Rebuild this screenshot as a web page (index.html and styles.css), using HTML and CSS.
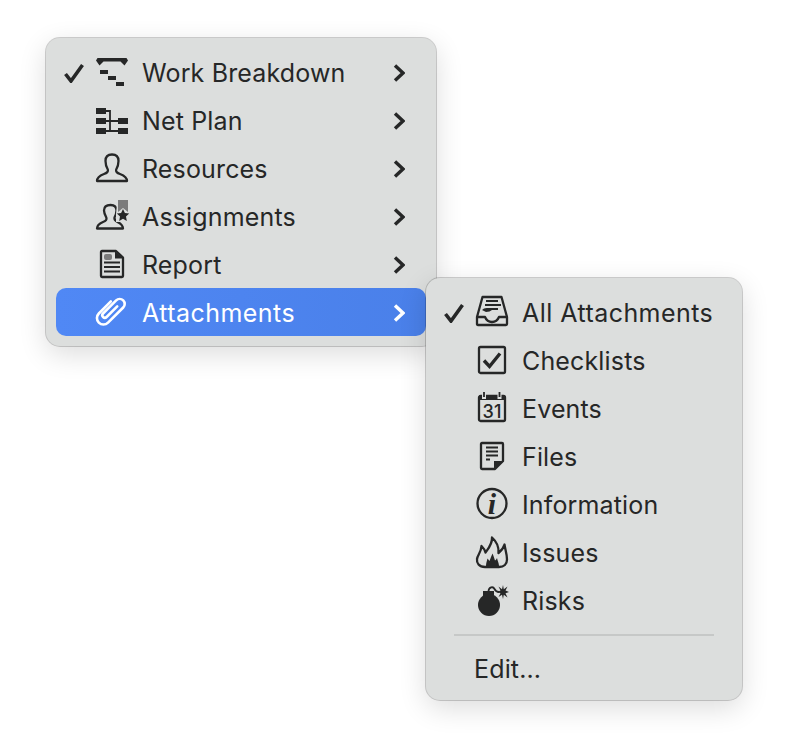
FILE: index.html
```html
<!DOCTYPE html>
<html lang="en">
<head>
<meta charset="utf-8">
<title>Menu</title>
<link rel="stylesheet" href="styles.css">
</head>
<body>
<div class="menu menu-main">
  <div class="row">
    <svg class="check" viewBox="0 0 20 20"><path d="M1.500 11 L7 18 L18.500 2"/></svg>
    <svg class="icon" viewBox="0 0 32 32"><path class="solid" d="M1.500 1 H30.500 L32 3.500 L28.500 8.500 L24.500 4.500 H7.500 L3.500 8.500 L0 3.500 Z"/><rect class="solid" x="4" y="13" width="8" height="4"/><rect class="solid" x="12" y="19" width="8" height="4"/><rect class="solid" x="20" y="25" width="8" height="4"/></svg>
    <span class="label">Work Breakdown</span>
    <svg class="chev" viewBox="0 0 12 18"><path d="M2 1.500 L10 9 L2 16.500"/></svg>
  </div>
  <div class="row">
    <span class="check"></span>
    <svg class="icon" viewBox="0 0 32 32"><rect class="solid" x="0" y="3" width="10" height="6"/><rect class="solid" x="0" y="13" width="10" height="6"/><rect class="solid" x="0" y="23" width="10" height="6"/><rect class="solid" x="22" y="13" width="10" height="6"/><rect class="solid" x="22" y="23" width="10" height="6"/><path class="thin" d="M10 6 H14 V26 M10 16 H14 M10 26 H22 M14 16 H22"/></svg>
    <span class="label">Net Plan</span>
    <svg class="chev" viewBox="0 0 12 18"><path d="M2 1.500 L10 9 L2 16.500"/></svg>
  </div>
  <div class="row">
    <span class="check"></span>
    <svg class="icon" viewBox="0 0 32 32"><path class="line" d="M1 28 C1 24.500 4 22.500 8 21 C11 20 12.500 18.500 11.800 16.500 C10.300 14 9.500 11 9.500 8 C9.500 4 12 1.500 16 1.500 C20 1.500 22.500 4 22.500 8 C22.500 11 21.700 14 20.200 16.500 C19.500 18.500 21 20 24 21 C28 22.500 31 24.500 31 28 Z"/></svg>
    <span class="label">Resources</span>
    <svg class="chev" viewBox="0 0 12 18"><path d="M2 1.500 L10 9 L2 16.500"/></svg>
  </div>
  <div class="row">
    <span class="check"></span>
    <svg class="icon" viewBox="0 0 32 32"><path class="line" d="M1 27.500 C1 24.500 3.500 22.500 7 21 C10 20 11 18.500 10.300 16.500 C9 14 8 12 8 9.500 C8 6 10.500 4 14.500 4 C18.500 4 20.500 6 20.500 9.500 C20.500 12 19.800 14 18.500 16.500 C18 19 19.500 20 21.500 21 C24.500 22.500 27 24.500 27 27.500 Z"/><path class="halo" d="M21.500 -2 H34 V21 H20 V13 Z"/><path class="ribbon" d="M22 -1 H32 V11 L27 7 L22 11 Z"/><path class="star" d="M27 8 L28.900 12.100 L33.200 12.600 L30 15.600 L30.800 20 L27 17.800 L23.200 20 L24 15.600 L20.800 12.600 L25.100 12.100 Z"/></svg>
    <span class="label">Assignments</span>
    <svg class="chev" viewBox="0 0 12 18"><path d="M2 1.500 L10 9 L2 16.500"/></svg>
  </div>
  <div class="row">
    <span class="check"></span>
    <svg class="icon" viewBox="0 0 32 32"><path class="line" d="M5 3 Q5 2 6 2 H20 L27 8.500 V27 Q27 28 26 28 H6 Q5 28 5 27 Z"/><path class="solid" d="M19 2 L27.500 9.500 H19 Z"/><rect class="ribbon" x="8" y="5" width="8" height="6" rx="2"/><path class="bars" d="M8 13.500 H24 M8 18 H24 M8 22.500 H24"/></svg>
    <span class="label">Report</span>
    <svg class="chev" viewBox="0 0 12 18"><path d="M2 1.500 L10 9 L2 16.500"/></svg>
  </div>
  <div class="row row-active">
    <span class="check"></span>
    <svg class="icon" viewBox="0 0 32 32"><g transform="rotate(45 14.500 14)"><path class="clip" d="M8 7 V24 A6.500 6.500 0 0 0 21 24 V2.500 A5 5 0 0 0 11 2.500 V21 A2.500 2.500 0 0 0 16 21 V6"/></g></svg>
    <span class="label label-wide">Attachments</span>
    <svg class="chev" viewBox="0 0 12 18"><path d="M2 1.500 L10 9 L2 16.500"/></svg>
  </div>
</div>
<div class="menu menu-sub">
  <div class="row">
    <svg class="check" viewBox="0 0 20 20"><path d="M1.500 11 L7 18 L18.500 2"/></svg>
    <svg class="icon" viewBox="0 0 32 32"><path class="line" d="M1 20 L6.500 0 H25.500 L31 20"/><path class="line" d="M1 20 H9 Q11 25 16 25 Q21 25 23 20 H31 V27 Q31 28 30 28 H2 Q1 28 1 27 Z"/><path class="bars" d="M10 4 H22 M9 8 H25"/><path class="solid" d="M6 13 Q8 10.500 12 11 H22 V13 H16 Q14 15 10 15 Z"/></svg>
    <span class="label label-wide">All Attachments</span>
  </div>
  <div class="row">
    <span class="check"></span>
    <svg class="icon" viewBox="0 0 32 32"><rect class="line" x="3" y="2" width="26" height="26" rx="1.500"/><path class="tick" d="M8 15.500 L13.500 21.500 L24 8.500"/></svg>
    <span class="label">Checklists</span>
  </div>
  <div class="row">
    <span class="check"></span>
    <svg class="icon" viewBox="0 0 32 32"><rect class="line" x="3" y="3" width="26" height="25" rx="1.500"/><path class="solid" d="M3 2.500 H29 V7 H3 Z"/><path class="notch" d="M8 0 V6 M23.500 0 V6"/><path class="peg" d="M8 -1 V4 M23.500 -1 V4"/><text class="cal" x="16" y="25">31</text></svg>
    <span class="label">Events</span>
  </div>
  <div class="row">
    <span class="check"></span>
    <svg class="icon" viewBox="0 0 32 32"><path class="line" d="M5 3 Q5 2 6 2 H26 Q27 2 27 3 V20 L19 28 H6 Q5 28 5 27 Z"/><path class="solid" d="M18 28 V20 H28 Z"/><path class="bars" d="M10 6.500 H22 M10 10.500 H22 M10 14.500 H22 M10 18.500 H14"/></svg>
    <span class="label">Files</span>
  </div>
  <div class="row">
    <span class="check"></span>
    <svg class="icon" viewBox="0 0 32 32"><circle class="line" cx="16" cy="14.500" r="14.500"/><text class="info" x="16" y="25">i</text></svg>
    <span class="label">Information</span>
  </div>
  <div class="row">
    <span class="check"></span>
    <svg class="icon" viewBox="0 0 32 32"><path class="line" d="M9 30 C3 30 0.500 26 1 22 C1.500 18 5 16 5.500 9 C7.500 11 9 13 9.500 15.500 C12 12 16.500 7 16 0.500 C20 4 23 9 22.500 16 C25 14 27.500 11 28.500 7.500 C29 12 31 17 31 22.500 C31 27 28 30 23 30 Z"/><path class="solid" d="M10 29 C10 26 11 24 11.500 21.500 C12.500 22.500 13 23.500 13.500 24 C14.500 21 15.500 19 16.500 16.500 C17.500 19 18.500 21.500 19 23.500 C20 23 20.500 22 21 21 C21.500 24 23 26 23 29 Z"/></svg>
    <span class="label">Issues</span>
  </div>
  <div class="row">
    <span class="check"></span>
    <svg class="icon" viewBox="0 0 32 32"><circle class="solid" cx="13" cy="20" r="11"/><rect class="solid" x="7" y="6" width="11" height="5"/><path class="fuse" d="M12.500 6 C13 2 17 1 18.500 4 C19.500 6 21 7 23 7"/><path class="star" d="M27 0 L27.800 4.200 L31.500 1.500 L29.500 5.500 L33 7 L29.500 8.200 L31.500 12.500 L27.800 9.800 L27 14 L26 9.800 L22.500 12 L24.500 8.200 L21 7 L24.500 5.500 L22.500 1.500 L26 4.200 Z"/></svg>
    <span class="label">Risks</span>
  </div>
  <div class="separator"></div>
  <div class="row row-plain">
    <span class="label">Edit...</span>
  </div>
</div>
</body>
</html>
```
FILE: styles.css
```css
* { box-sizing: border-box; }
html, body { margin: 0; padding: 0; background: #ffffff; }
body {
  position: relative;
  width: 788px;
  height: 754px;
  overflow: hidden;
  font-family: Inter, "Liberation Sans", sans-serif;
  font-size: 25px;
  color: #262727;
}
.menu {
  position: absolute;
  background: #dcdedd;
  border-radius: 14px;
  box-shadow: 0 0 0 1px rgba(0, 0, 0, 0.18), 0 8px 28px rgba(0, 0, 0, 0.14);
}
.menu-main {
  left: 46px;
  top: 38px;
  width: 390px;
  height: 308px;
  padding: 10px 10px;
}
.menu-main .row { padding-top: 2px; }
.menu-sub {
  left: 426px;
  top: 278px;
  width: 316px;
  height: 422px;
  padding: 11px 10px;
}
.row {
  display: flex;
  align-items: center;
  height: 48px;
  padding-left: 8px;
  border-radius: 10px;
}
.row-active {
  background: linear-gradient(90deg, #5088f5, #4a80e9);
  color: #ffffff;
}
.row-plain { padding-left: 38px; }
.check {
  width: 20px;
  height: 20px;
  margin-right: 12px;
  flex: none;
  fill: none;
  stroke: #262727;
  stroke-width: 3.600;
}
.icon {
  width: 32px;
  height: 32px;
  flex: none;
  margin-right: 14px;
  overflow: visible;
}
.label { flex: 1; letter-spacing: 0.15px; white-space: nowrap; }
.label-wide { letter-spacing: 0.45px; }
.chev {
  width: 12px;
  height: 18px;
  flex: none;
  margin-right: 21px;
  fill: none;
  stroke: #262727;
  stroke-width: 3.400;
}
.row-active .chev { stroke: #ffffff; }
.solid { fill: #262727; }
.line { fill: none; stroke: #262727; stroke-width: 2.300; stroke-linejoin: round; }
.thin { fill: none; stroke: #262727; stroke-width: 1.800; }
.bars { fill: none; stroke: #262727; stroke-width: 2; }
.tick { fill: none; stroke: #262727; stroke-width: 3.400; }
.notch { fill: none; stroke: #dcdedd; stroke-width: 4; }
.peg { fill: none; stroke: #262727; stroke-width: 1.800; }
.ribbon { fill: #7b7b7b; }
.halo { fill: #dcdedd; }
.star { fill: #262727; }
.clip { fill: none; stroke: #ffffff; stroke-width: 2.600; stroke-linecap: round; }
.fuse { fill: none; stroke: #262727; stroke-width: 1.800; }
.cal {
  font-family: Inter, "Liberation Sans", sans-serif;
  font-size: 18px;
  font-weight: 500;
  text-anchor: middle;
  fill: #262727;
}
.info {
  font-family: "Liberation Serif", serif;
  font-size: 30px;
  font-weight: 700;
  font-style: italic;
  text-anchor: middle;
  fill: #262727;
}
.separator {
  height: 2px;
  margin: 9px 18px 9px 18px;
  background: #c6c8c7;
}
```
